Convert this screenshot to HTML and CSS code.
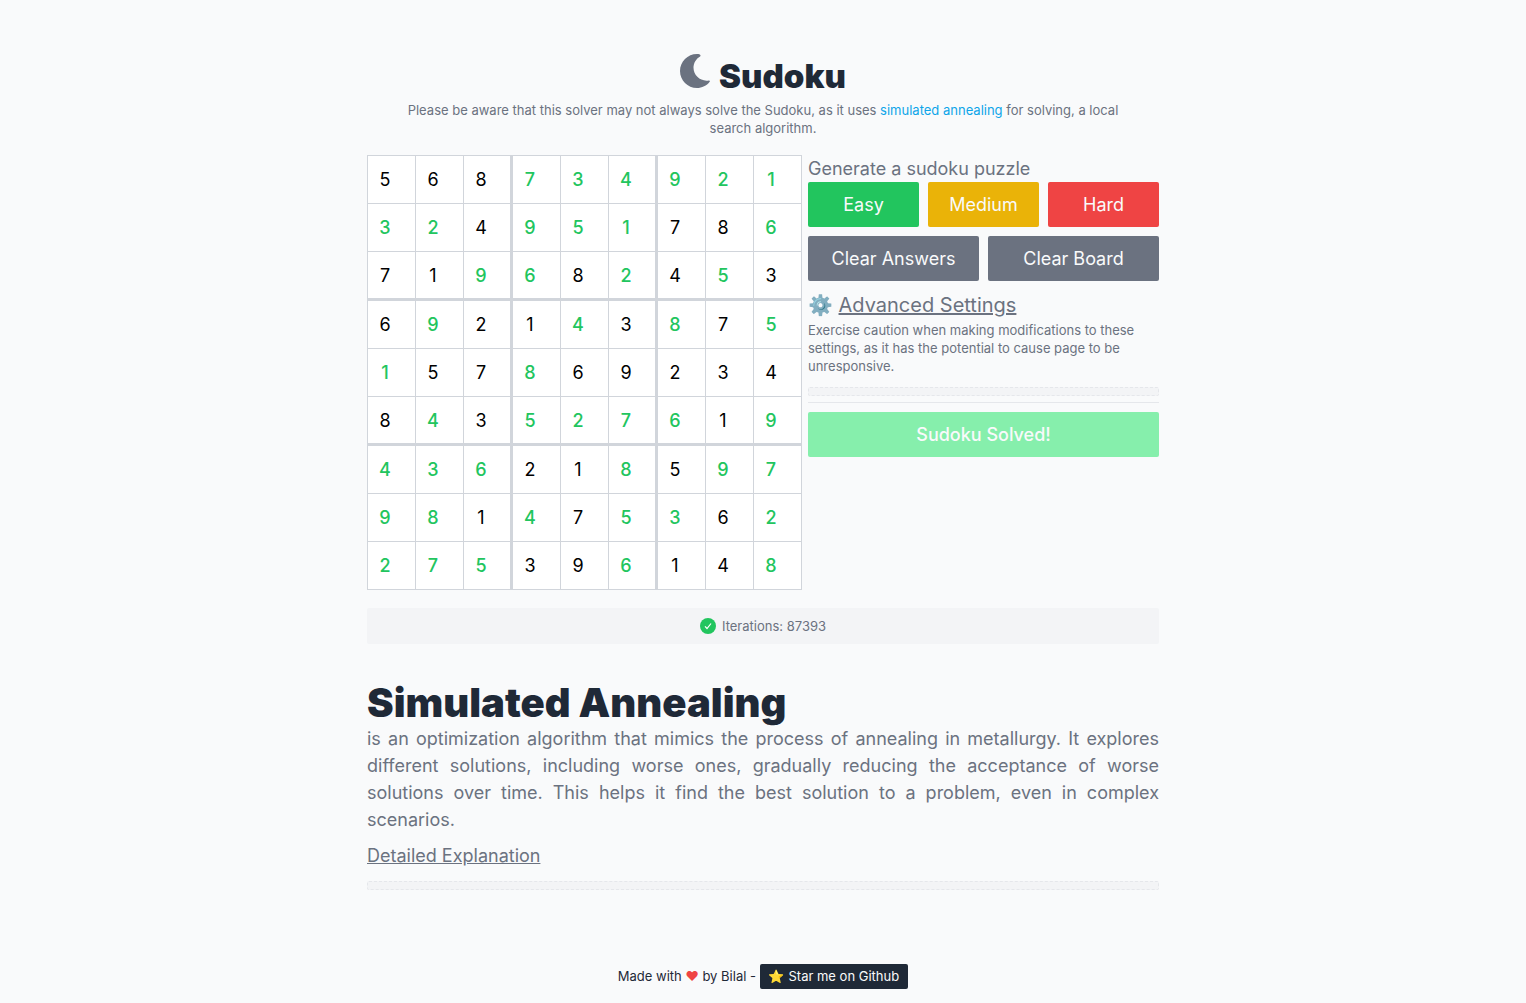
FILE: index.html
```html
<!DOCTYPE html>
<html lang="en">
<head>
<meta charset="utf-8">
<meta name="viewport" content="width=device-width, initial-scale=1">
<title>Sudoku</title>
<link rel="stylesheet" href="styles.css">
</head>
<body>
<main class="page">
  <header class="intro">
    <h1 class="title">
      <button class="theme" type="button" aria-label="Toggle dark mode">
        <svg class="moon" viewBox="0 0 30 34" aria-hidden="true"><path d="M17 0C7.600 0 0 7.600 0 17s7.600 17 17 17c5 0 9.600-2.400 12.700-6.300.5-.6 0-1.400-.8-1.300C21 27.900 13.500 21.800 13.500 13.800c0-4.800 2.500-9 6.600-11.400.7-.4.5-1.900-.3-2C18.900.1 18 0 17 0z"/></svg>
      </button>
      Sudoku
    </h1>
    <p class="small">Please be aware that this solver may not always solve the Sudoku, as it uses <a class="link" href="#annealing">simulated annealing</a> for solving, a local search algorithm.</p>
  </header>

  <div class="game">
    <table class="board" aria-label="Sudoku board"><tbody id="cells"></tbody></table>
    <section class="panel">
      <p>Generate a sudoku puzzle</p>
      <div class="buttons">
        <button class="btn easy" type="button">Easy</button>
        <button class="btn medium" type="button">Medium</button>
        <button class="btn hard" type="button">Hard</button>
      </div>
      <div class="buttons">
        <button class="btn clear" type="button">Clear Answers</button>
        <button class="btn clear" type="button">Clear Board</button>
      </div>
      <h2 class="advanced">⚙️ <a href="#settings">Advanced Settings</a></h2>
      <p class="small">Exercise caution when making modifications to these settings, as it has the potential to cause page to be unresponsive.</p>
      <div class="collapsed" id="settings"></div>
      <hr class="rule">
      <button class="btn solved" type="button" disabled>Sudoku Solved!</button>
    </section>
  </div>

  <p class="status small">
    <svg class="check" viewBox="0 0 16 16" aria-hidden="true"><circle cx="8" cy="8" r="8"/><path d="M5 8.300l2 2.200 4-5"/></svg>
    Iterations: 87393
  </p>

  <section class="about" id="annealing">
    <h2 class="heading">Simulated Annealing</h2>
    <p class="text">is an optimization algorithm that mimics the process of annealing in metallurgy. It explores different solutions, including worse ones, gradually reducing the acceptance of worse solutions over time. This helps it find the best solution to a problem, even in complex scenarios.</p>
    <a class="more" href="#details">Detailed Explanation</a>
    <div class="collapsed" id="details"></div>
  </section>

  <footer class="footer small">Made with <span class="heart">❤</span> by Bilal - <a class="star" href="#github">⭐ Star me on Github</a></footer>
</main>
<script src="board.js"></script>
</body>
</html>
```
FILE: styles.css
```css
* { box-sizing: border-box; margin: 0; padding: 0; }
body {
  background: #f9fafb;
  color: #6b7280;
  font: 18px/27px Inter, "Noto Color Emoji", sans-serif;
}
button, input { font: inherit; color: inherit; border: 0; }
a { color: inherit; }
.page { max-width: 792px; margin: 0 auto; padding-top: 54px; }
.small { font-size: 13px; line-height: 18px; }

.intro { text-align: center; padding: 0 27px; }
.title {
  display: flex;
  justify-content: center;
  gap: 9px;
  color: #1f2937;
  font-size: 33px;
  font-weight: 900;
  line-height: 44px;
  padding-bottom: 3px;
}
.theme { display: flex; align-items: flex-start; background: none; color: #6b7280; cursor: pointer; }
.moon { width: 30px; height: 34px; fill: currentColor; }
.link { color: #0ea5e9; text-decoration: none; }

.game { display: flex; align-items: flex-start; gap: 6px; margin-top: 18px; }
.board {
  flex: none;
  border-collapse: separate;
  border-spacing: 0;
  border: solid #d1d5db;
  border-width: 1px 0 0 1px;
}
.board td { width: 48px; height: 48px; background: #fff; border: solid #d1d5db; border-width: 0 1px 1px 0; }
.board td:nth-child(3n):not(:last-child) { width: 49px; border-right-width: 3px; }
.board tr:nth-child(3n):not(:last-child) td { height: 49px; border-bottom-width: 3px; }
.cell { display: block; width: 34px; height: 46px; background: none; color: #000; text-align: center; }
.found { color: #22c55e; font-weight: 500; }

.panel { flex: 1; min-width: 0; }
.buttons { display: flex; gap: 9px; margin-bottom: 9px; }
.btn { flex: 1 1 0; height: 45px; border-radius: 2px; color: #f9fafb; }
.easy { background: #22c55e; }
.medium { background: #eab308; }
.hard { background: #ef4444; }
.clear { background: #6b7280; }
.advanced { font-size: 20px; font-weight: 400; line-height: 31px; }
.collapsed { height: 9px; margin-top: 12px; background: #f3f4f6; border: 1px dashed #e5e7eb; border-radius: 2px; }
.rule { border: 0; border-top: 1px solid #e5e7eb; margin: 6px 0 9px; }
.solved { width: 100%; background: #86efac; font-weight: 500; }

.status {
  display: flex;
  align-items: center;
  justify-content: center;
  gap: 6px;
  margin-top: 18px;
  padding: 9px;
  background: #f3f4f6;
  border-radius: 2px;
}
.check { width: 16px; height: 16px; fill: #22c55e; }
.check path { fill: none; stroke: #fff; stroke-width: 1.2; }

.about { margin-top: 36px; }
.heading { color: #1f2937; font-size: 40px; font-weight: 900; line-height: 45px; }
.text { text-align: justify; margin-bottom: 9px; }
.more { display: block; width: fit-content; }

.footer { margin-top: 74px; padding-bottom: 14px; color: #1f2937; text-align: center; line-height: 25px; }
.heart { color: #ef4444; }
.star { display: inline-block; padding: 0 9px; background: #1f2937; color: #f9fafb; border-radius: 2px; text-decoration: none; }
```
FILE: board.js
```js
// Each row lists its nine digits; a digit found by the solver is followed by "*".
const rows = [
  "5 6 8 7* 3* 4* 9* 2* 1*",
  "3* 2* 4 9* 5* 1* 7 8 6*",
  "7 1 9* 6* 8 2* 4 5* 3",
  "6 9* 2 1 4* 3 8* 7 5*",
  "1* 5 7 8* 6 9 2 3 4",
  "8 4* 3 5* 2* 7* 6* 1 9*",
  "4* 3* 6* 2 1 8* 5 9* 7*",
  "9* 8* 1 4* 7 5* 3* 6 2*",
  "2* 7* 5* 3 9 6* 1 4 8*"
];
const cells = document.getElementById("cells");
rows.forEach((row, r) => {
  const tr = cells.insertRow();
  row.split(" ").forEach((mark, c) => {
    const input = document.createElement("input");
    input.className = mark.endsWith("*") ? "cell found" : "cell";
    input.type = "text";
    input.inputMode = "numeric";
    input.maxLength = 1;
    input.value = mark[0];
    input.setAttribute("aria-label", `Row ${r + 1}, column ${c + 1}`);
    tr.insertCell().append(input);
  });
});
```
